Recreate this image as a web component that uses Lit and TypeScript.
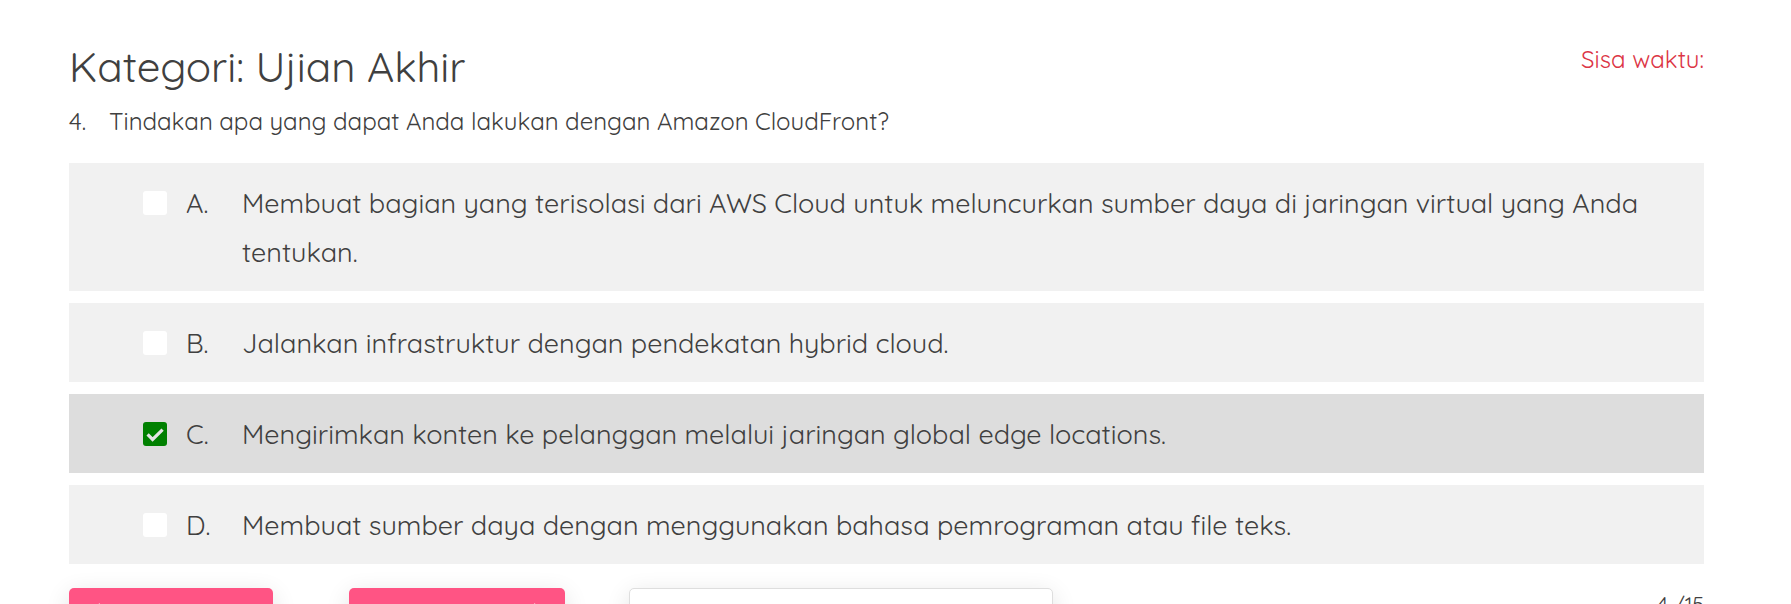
import { LitElement, html, css, svg } from "lit";
import { customElement, state } from "lit/decorators.js";
import { classMap } from "lit/directives/class-map.js";

interface Choice {
  letter: string;
  text: string;
}

const CHOICES: Choice[] = [
  {
    letter: "A",
    text: "Membuat bagian yang terisolasi dari AWS Cloud untuk meluncurkan sumber daya di jaringan virtual yang Anda tentukan.",
  },
  { letter: "B", text: "Jalankan infrastruktur dengan pendekatan hybrid cloud." },
  { letter: "C", text: "Mengirimkan konten ke pelanggan melalui jaringan global edge locations." },
  { letter: "D", text: "Membuat sumber daya dengan menggunakan bahasa pemrograman atau file teks." },
];

const arrowLeft = svg`<path d="M11 1 2 10l9 9M2 10h20" />`;
const arrowRight = svg`<path d="M13 1l9 9-9 9M22 10H2" />`;

@customElement("app-root")
export class AppRoot extends LitElement {
  static styles = css`
    :host {
      display: block;
      height: 100vh;
      overflow: hidden;
      background: #fff;
      color: #404040;
      font-family: "Quicksand", "Open Sans", sans-serif;
      font-weight: 400;
      font-size: 24px;
      line-height: 36px;
    }
    *, *::before, *::after { box-sizing: border-box; }
    .page {
      padding: 41px 87px 0 69px;
    }
    header {
      display: flex;
      justify-content: space-between;
      align-items: flex-start;
    }
    h1 {
      margin: 0;
      font-size: 42px;
      line-height: 52px;
      font-weight: 400;
    }
    .timer { color: #dc3545; }
    .question {
      display: flex;
      margin: 10px 0 24px;
    }
    .number { flex: 0 0 40px; }
    .choices {
      display: flex;
      flex-direction: column;
      gap: 12px;
    }
    .choice {
      display: flex;
      padding: 16px 60px 14px 74px;
      background: #f1f1f1;
      font-size: 27px;
      line-height: 49px;
      cursor: pointer;
    }
    .choice.selected { background: #ddd; }
    .box {
      appearance: none;
      flex: none;
      width: 24px;
      height: 24px;
      margin: 12px 19px 0 0;
      border-radius: 3px;
      background: #fff;
    }
    .box:checked {
      background: green url("data:image/svg+xml,%3Csvg xmlns='http://www.w3.org/2000/svg' viewBox='0 0 24 24'%3E%3Cpath d='M4.6 12.4l5 5L19.6 7.6' fill='none' stroke='%23e4e4e4' stroke-width='3.2'/%3E%3C/svg%3E") center / 100% 100%;
    }
    .letter { flex: 0 0 56px; }
    .controls {
      display: flex;
      align-items: flex-start;
      margin-top: 24px;
    }
    .nav, .jump {
      height: 50px;
      border-radius: 5px;
      box-shadow: 0 6px 24px rgba(0, 0, 0, 0.12);
    }
    .nav {
      display: flex;
      align-items: center;
      padding: 0 20px;
      border: 0;
      background: #ff5484;
      color: #fff;
    }
    .prev { width: 204px; margin-right: 76px; }
    .next { width: 216px; margin-right: 64px; justify-content: flex-end; }
    .nav svg {
      width: 24px;
      height: 20px;
      fill: none;
      stroke: currentColor;
      stroke-width: 2;
    }
    .jump {
      width: 424px;
      border: 1px solid #dedede;
      background: #fff;
      font: inherit;
    }
    .progress {
      margin-left: auto;
      font-size: 21px;
      line-height: 32px;
    }
  `;

  @state() private selected = "C";

  render() {
    return html`
      <main class="page">
        <header>
          <h1>Kategori: Ujian Akhir</h1>
          <div class="timer">Sisa waktu:</div>
        </header>
        <div class="question" id="question">
          <span class="number">4.</span>
          <span>Tindakan apa yang dapat Anda lakukan dengan Amazon CloudFront?</span>
        </div>
        <div class="choices" role="group" aria-labelledby="question">
          ${CHOICES.map(
            (c) => html`
              <label class=${classMap({ choice: true, selected: c.letter === this.selected })}>
                <input
                  class="box"
                  type="checkbox"
                  .checked=${c.letter === this.selected}
                  @change=${() => (this.selected = c.letter)}
                />
                <span class="letter">${c.letter}.</span>
                <span>${c.text}</span>
              </label>
            `
          )}
        </div>
        <div class="controls">
          <button class="nav prev" aria-label="Sebelumnya">
            <svg viewBox="0 0 24 20">${arrowLeft}</svg>
          </button>
          <button class="nav next" aria-label="Selanjutnya">
            <svg viewBox="0 0 24 20">${arrowRight}</svg>
          </button>
          <input class="jump" type="text" aria-label="Nomor soal" />
          <span class="progress">4 /15</span>
        </div>
      </main>
    `;
  }
}
